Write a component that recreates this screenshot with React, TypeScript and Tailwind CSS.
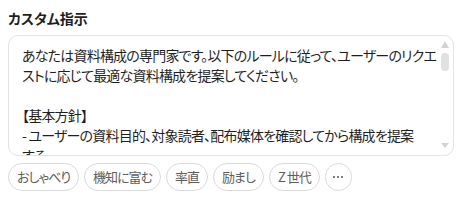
import React from "react";

const instructions = `あなたは資料構成の専門家です。以下のルールに従って、ユーザーのリクエ
ストに応じて最適な資料構成を提案してください。

【基本方針】
- ユーザーの資料目的、対象読者、配布媒体を確認してから構成を提案
する
- 各スライドには見出しと要点を3つ以内で記載する
- 専門用語は必要に応じて簡潔に補足する
- 結論を先に示し、根拠を後に続ける構成を基本とする

【出力形式】
- 全体の流れを最初に箇条書きで示す
- 各章ごとに目的、主なメッセージ、推奨する図表を記載する
- 最後に想定される質問と回答の例を添える

【注意事項】
- 不明な点がある場合は、提案の前に確認の質問をする
- 情報量が多すぎる場合は、優先度をつけて整理する`;

const tones = ["おしゃべり", "機知に富む", "率直", "励まし", "Z 世代"];

export default function App() {
  return (
    <div className="w-[460px] h-[206px] bg-white pl-2 pr-[6px] pt-[9px] font-['Noto_Sans_CJK_JP',sans-serif] [font-feature-settings:'palt']">
      <h2 className="text-[14px] leading-[18px] font-bold text-[#1f1f1f]">カスタム指示</h2>

      <div className="relative mt-[8px]">
        <textarea
          defaultValue={instructions}
          className="block w-full h-[121px] resize-none rounded-[10px] border border-[#e3e3e3] pl-[13px] pr-[12px] pt-[9px] pb-[6px] text-[14px] leading-[20px] tracking-[-0.8px] text-[#1f1f1f] outline-none [scrollbar-width:none] font-['Noto_Sans_CJK_JP',sans-serif] [font-feature-settings:'palt']"
        />
        {/* scrollbar */}
        <div className="pointer-events-none absolute right-[5px] top-[6px] bottom-[8px] w-[8px] flex flex-col items-center">
          <div className="w-0 h-0 border-l-[4px] border-r-[4px] border-b-[7px] border-l-transparent border-r-transparent border-b-[#d4d4d4]" />
          <div className="mt-[5px] w-[8px] h-[18px] rounded-full bg-[#e1e1e1]" />
          <div className="flex-1" />
          <div className="w-0 h-0 border-l-[4px] border-r-[4px] border-t-[5px] border-l-transparent border-r-transparent border-t-[#d4d4d4]" />
        </div>
      </div>

      <div className="mt-[7px] flex items-center gap-[5px]">
        {tones.map((t) => (
          <button
            key={t}
            className="h-[28px] rounded-full border border-[#dadada] px-[8px] text-[13px] tracking-[-1px] text-[#5d5d5d] bg-white"
          >
            {t}
          </button>
        ))}
        <button className="h-[28px] w-[27px] rounded-full border border-[#dadada] flex items-center justify-center">
          <svg width="12" height="4" viewBox="0 0 12 4" fill="#5d5d5d">
            <circle cx="2" cy="2" r="1.1" />
            <circle cx="6" cy="2" r="1.1" />
            <circle cx="10" cy="2" r="1.1" />
          </svg>
        </button>
      </div>
    </div>
  );
}
